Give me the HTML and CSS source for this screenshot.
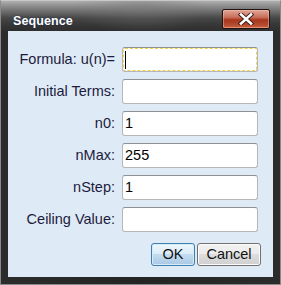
FILE: index.html
```html
<!DOCTYPE html>
<html>
<head>
<meta charset="utf-8">
<link rel="stylesheet" href="styles.css">
</head>
<body>
<div class="window">
  <div class="titlebar">
    <span class="title">Sequence</span>
    <div class="close">
      <svg width="16" height="12" viewBox="0 0 16 12">
        <path d="M3 1.5 L13 10.5 M13 1.5 L3 10.5" stroke="#3a1a14" stroke-width="4.4" stroke-linecap="square"/>
        <path d="M3 1.5 L13 10.5 M13 1.5 L3 10.5" stroke="#ffffff" stroke-width="2.6" stroke-linecap="square"/>
      </svg>
    </div>
  </div>
  <div class="content">
    <div class="form">
      <label class="lbl">Formula: u(n)=</label>
      <div class="field focused"><span class="caret"></span></div>
      <label class="lbl">Initial Terms:</label>
      <div class="field"></div>
      <label class="lbl">n0:</label>
      <div class="field">1</div>
      <label class="lbl">nMax:</label>
      <div class="field">255</div>
      <label class="lbl">nStep:</label>
      <div class="field">1</div>
      <label class="lbl">Ceiling Value:</label>
      <div class="field"></div>
    </div>
    <div class="buttons">
      <div class="btn ok">OK</div>
      <div class="btn cancel">Cancel</div>
    </div>
  </div>
</div>
</body>
</html>
```
FILE: styles.css
```css
html, body {
  margin: 0;
  padding: 0;
  background: #2a2a2a;
}
.window {
  width: 281px;
  height: 285px;
  box-sizing: border-box;
  border: 1px solid #8a8a8a;
  border-top-color: #c8c8c8;
  background: linear-gradient(90deg, #2c2c2c, #242424 50%, #2c2c2c);
  display: flex;
  flex-direction: column;
  font-family: "Liberation Sans", Arial, sans-serif;
}
.titlebar {
  height: 30px;
  flex: none;
  display: flex;
  align-items: flex-start;
  justify-content: space-between;
  background:
    radial-gradient(ellipse 70px 26px at 140px 6px, rgba(120,120,120,0.45), rgba(120,120,120,0) 100%),
    linear-gradient(180deg, #b0b0b0 0px, #8e8e8e 5px, #6a6a6a 11px, #474747 17px, #363636 24px, #2e2e2e 30px);
}
.title {
  color: #ffffff;
  font-weight: bold;
  font-size: 12.5px;
  margin: 13px 0 0 12px;
  text-shadow: 0 0 2px rgba(20,40,80,0.9);
  letter-spacing: 0.1px;
}
.close {
  width: 48px;
  height: 20px;
  box-sizing: border-box;
  margin: 8px 10px 0 0;
  border: 1px solid #1c1412;
  border-radius: 2px;
  background: linear-gradient(180deg, #e0a698 0%, #c8705c 40%, #a8361c 55%, #b04a2e 80%, #d06040 100%);
  box-shadow: inset 0 0 0 1px rgba(255,200,180,0.45);
  display: flex;
  align-items: center;
  justify-content: center;
}
.close svg { display: block; }
.content {
  margin: 0 7px 7px 7px;
  flex: 1;
  background: #dfeaf7;
  display: flex;
  flex-direction: column;
}
.form {
  display: grid;
  grid-template-columns: 107px 136px;
  column-gap: 7px;
  row-gap: 7px;
  padding-top: 16px;
}
.lbl {
  font-size: 14.5px;
  color: #1c1c3c;
  text-align: right;
  line-height: 25px;
  height: 25px;
  white-space: nowrap;
}
.field {
  height: 25px;
  box-sizing: border-box;
  background: #ffffff;
  border: 1px solid #b4b6ba;
  border-top-color: #8d8f93;
  border-radius: 3px;
  font-size: 14.5px;
  color: #000000;
  line-height: 23px;
  padding-left: 2px;
  position: relative;
}
.field.focused {
  outline: 1px dashed #f2d24a;
  outline-offset: -2px;
}
.caret {
  position: absolute;
  left: 2px;
  top: 3px;
  width: 1px;
  height: 18px;
  background: #000;
}
.buttons {
  display: flex;
  justify-content: flex-end;
  gap: 2px;
  margin-top: 11px;
  padding-right: 12px;
}
.btn {
  height: 23px;
  box-sizing: border-box;
  border-radius: 3px;
  font-size: 14.5px;
  color: #111;
  line-height: 21px;
  text-align: center;
}
.ok {
  width: 44px;
  border: 1px solid #3c7fb1;
  background: linear-gradient(180deg, #eef7fd 0%, #dcecf8 45%, #c4dcf0 50%, #a9c8e4 100%);
  box-shadow: inset 0 0 0 1px #d8ecf8;
}
.cancel {
  width: 64px;
  border: 1px solid #707070;
  background: linear-gradient(180deg, #f2f2f2 0%, #ebebeb 45%, #dddddd 50%, #cfcfcf 100%);
  box-shadow: inset 0 0 0 1px #fcfcfc;
}
```
